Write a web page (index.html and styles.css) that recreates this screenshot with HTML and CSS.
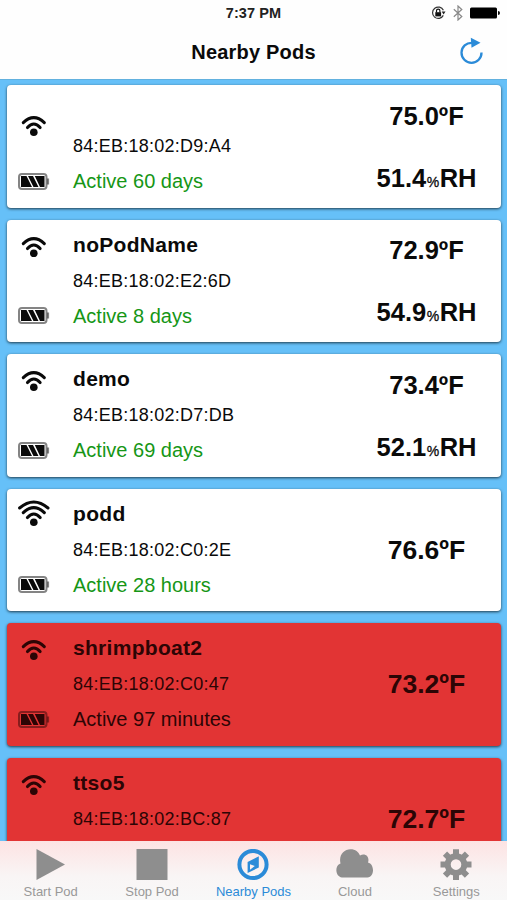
FILE: index.html
```html
<!DOCTYPE html>
<html lang="en">
<head>
<meta charset="utf-8">
<title>Nearby Pods</title>
<link rel="stylesheet" href="styles.css">
</head>
<body>
<svg class="sprite" aria-hidden="true">
  <symbol id="wifi" viewBox="0 0 32 28">
    <circle cx="15.800" cy="22.300" r="3.800" fill="currentColor"/>
    <path d="M9.500 17.600Q15.800 10.400 22.100 17.600M5.300 12.600Q15.800 2.800 26.300 12.600" fill="none" stroke="currentColor" stroke-width="3.100" stroke-linecap="round"/>
  </symbol>
  <symbol id="wifi-full" viewBox="0 0 32 28">
    <use href="#wifi" width="32" height="28"/>
    <path d="M1.600 8Q15.800 -4 30 8" fill="none" stroke="currentColor" stroke-width="3" stroke-linecap="round"/>
  </symbol>
  <symbol id="battery" viewBox="0 0 32 17">
    <rect x="1" y="1" width="27.500" height="15" rx="3" fill="none" stroke="currentColor" stroke-opacity=".5" stroke-width="2"/>
    <path d="M30 5.500v6" stroke="currentColor" stroke-opacity=".5" stroke-width="2.200"/>
    <path d="M3 3h5.500l5.500 11H3zM10 3h5l5.500 11H15.500zM16.800 3H26.500v11h-4.500z" fill="currentColor"/>
  </symbol>
</svg>

<div class="screen">
  <header class="header">
    <div class="status">
      <span></span>
      <span class="time">7:37 PM</span>
      <span class="indicators">
        <svg width="15" height="14" viewBox="0 0 15 14">
          <path d="M12.300 9.400A5.700 5.700 0 1 1 12.400 4.300" fill="none" stroke="#333" stroke-width="1.200"/>
          <path d="M10.700 5.500h3.800l-1.900 2.900z" fill="#222"/>
          <rect x="4.300" y="6.200" width="5.800" height="4.200" fill="#111"/>
          <path d="M5.500 6.500V4.800a1.700 1.700 0 0 1 3.400 0v1.700" fill="none" stroke="#111" stroke-width="1.200"/>
        </svg>
        <svg width="10" height="16" viewBox="0 0 10 16">
          <path d="M.8 4.200l8 7.300L5 15V1l3.800 3.500-8 7.300" fill="none" stroke="#888" stroke-width="1.200"/>
        </svg>
        <svg width="30" height="12" viewBox="0 0 30 12">
          <rect x="0" y=".5" width="27" height="11" rx="1.500" fill="#000"/>
          <path d="M28 4a2 2 0 0 1 0 4z" fill="#111"/>
        </svg>
      </span>
    </div>
    <div class="navbar">
      <span></span>
      <h1 class="title">Nearby Pods</h1>
      <svg class="refresh" width="26" height="28" viewBox="0 0 26 28">
        <path d="M22.500 15.500A10 10 0 1 1 13 5.800" fill="none" stroke="#2b8bd8" stroke-width="2.300"/>
        <path d="M11.800 .8L21.500 5.800L12.500 10.800z" fill="#2b8bd8"/>
      </svg>
    </div>
  </header>

  <main class="list">
    <article class="card unnamed">
      <div class="icons"><svg class="wifi"><use href="#wifi"/></svg><svg class="battery"><use href="#battery"/></svg></div>
      <div class="info"><h2 class="name"></h2><p class="mac">84:EB:18:02:D9:A4</p><p class="active">Active 60 days</p></div>
      <div class="readings"><p>75.0ºF</p><p class="humidity">51.4<small>%</small>RH</p></div>
    </article>
    <article class="card">
      <div class="icons"><svg class="wifi"><use href="#wifi"/></svg><svg class="battery"><use href="#battery"/></svg></div>
      <div class="info"><h2 class="name">noPodName</h2><p class="mac">84:EB:18:02:E2:6D</p><p class="active">Active 8 days</p></div>
      <div class="readings"><p>72.9ºF</p><p class="humidity">54.9<small>%</small>RH</p></div>
    </article>
    <article class="card">
      <div class="icons"><svg class="wifi"><use href="#wifi"/></svg><svg class="battery"><use href="#battery"/></svg></div>
      <div class="info"><h2 class="name">demo</h2><p class="mac">84:EB:18:02:D7:DB</p><p class="active">Active 69 days</p></div>
      <div class="readings"><p>73.4ºF</p><p class="humidity">52.1<small>%</small>RH</p></div>
    </article>
    <article class="card">
      <div class="icons"><svg class="wifi"><use href="#wifi-full"/></svg><svg class="battery"><use href="#battery"/></svg></div>
      <div class="info"><h2 class="name">podd</h2><p class="mac">84:EB:18:02:C0:2E</p><p class="active">Active 28 hours</p></div>
      <div class="readings single"><p>76.6ºF</p></div>
    </article>
    <article class="card alert">
      <div class="icons"><svg class="wifi"><use href="#wifi"/></svg><svg class="battery"><use href="#battery"/></svg></div>
      <div class="info"><h2 class="name">shrimpboat2</h2><p class="mac">84:EB:18:02:C0:47</p><p class="active">Active 97 minutes</p></div>
      <div class="readings single"><p>73.2ºF</p></div>
    </article>
    <article class="card alert">
      <div class="icons"><svg class="wifi"><use href="#wifi"/></svg></div>
      <div class="info"><h2 class="name">ttso5</h2><p class="mac">84:EB:18:02:BC:87</p></div>
      <div class="readings single"><p>72.7ºF</p></div>
    </article>
  </main>

  <nav class="tabs">
    <a class="tab"><svg width="38" height="32" viewBox="0 0 38 32"><path d="M4.500 0L33 15.500L4.500 31z" fill="currentColor"/></svg><span>Start Pod</span></a>
    <a class="tab"><svg width="38" height="32" viewBox="0 0 38 32"><path d="M3.500 0h31v31h-31z" fill="currentColor"/></svg><span>Stop Pod</span></a>
    <a class="tab current"><svg width="38" height="32" viewBox="0 0 38 32"><circle cx="19" cy="15.500" r="13.600" fill="none" stroke="currentColor" stroke-width="4"/><path fill-rule="evenodd" d="M24.800 7.200V18.500L13.600 24V13zM16 15.200V20.800L20.800 17z" fill="currentColor"/></svg><span>Nearby Pods</span></a>
    <a class="tab"><svg width="38" height="32" viewBox="0 0 38 32"><path d="M6 28.500C-1 28-1.500 16 4.500 14.500C2.500 6 8 .3 14.500 .3C19.500 .3 22.500 3 24 6.500C29 3.500 34 7.500 32 13.500C38.500 15 39 27.500 31.500 28.500z" fill="currentColor"/></svg><span>Cloud</span></a>
    <a class="tab"><svg width="38" height="32" viewBox="0 0 38 32"><g fill="none" stroke="currentColor"><circle cx="19" cy="15.600" r="8.300" stroke-width="6"/><path d="M19 .2v5.500M19 25.500V31M3.500 15.600H9M29 15.600h5.500M8 4.600l4 4M26 22.600l4 4M30 4.600l-4 4M12 22.600l-4 4" stroke-width="6"/></g></svg><span>Settings</span></a>
  </nav>
</div>
</body>
</html>
```
FILE: styles.css
```css
* { box-sizing: border-box; }
body { margin: 0; font-family: "Liberation Sans", Arial, sans-serif; color: #0a0a0a; }
h1, h2, p { margin: 0; }
svg { display: block; }
.sprite { position: absolute; width: 0; height: 0; }

.screen { width: 507px; height: 900px; display: flex; flex-direction: column; overflow: hidden; background: #66c0f8; }

.header { flex: none; height: 79px; background: #fefefe; }
.status { height: 27px; display: grid; grid-template-columns: 1fr auto 1fr; align-items: center; }
.time { font-size: 14.5px; font-weight: 700; line-height: 27px; letter-spacing: .1px; color: #222; }
.indicators { display: flex; align-items: center; justify-content: flex-end; gap: 7px; padding: 0 7px 1px 0; }
.navbar { height: 52px; display: grid; grid-template-columns: 1fr auto 1fr; }
.title { font-size: 20px; line-height: 50px; font-weight: 700; letter-spacing: .2px; }
.refresh { justify-self: end; margin: 10px 22px 0 0; }

.list { flex: none; height: 762px; padding: 5px 6px 0 7px; display: flex; flex-direction: column; gap: 12px; overflow: hidden; border-top: 1px solid #62b1df; }
.card { flex: none; height: 122.5px; display: grid; grid-template-columns: 66px 1fr 149px; background: #fff; border-radius: 4px; box-shadow: 0 1px 3px rgba(0, 0, 0, .7); }
.alert { background: #e23434; color: #2c0505; }
.icons { display: flex; flex-direction: column; padding: 11px 0 0 11px; }
.wifi { width: 32px; height: 28px; }
.battery { width: 32px; height: 17px; margin-top: 48.5px; }
.unnamed .icons { padding-top: 25px; }
.unnamed .battery { margin-top: 34.5px; }
.info { padding-top: 11px; white-space: nowrap; }
.name { height: 32px; font-size: 21px; line-height: 28px; font-weight: 700; letter-spacing: .3px; }
.mac { height: 36px; font-size: 18px; line-height: 36px; letter-spacing: .24px; }
.active { font-size: 20px; line-height: 34px; color: #169616; }
.alert .active { color: #2c0505; }
.readings { display: flex; flex-direction: column; justify-content: space-between; align-items: center; padding: 15.5px 0 11px; font-size: 25.5px; line-height: 30px; font-weight: 700; }
.readings.single { justify-content: center; padding: 0; font-size: 26.5px; }
.humidity small { font-size: 14px; font-weight: 400; margin: 0 .5px; -webkit-text-stroke: .3px currentColor; }

.tabs { flex: none; height: 59px; display: grid; grid-template-columns: repeat(5, 1fr); background: linear-gradient(#fde3e3, #f9f5f5 60%, #f8f8f8); }
.tab { display: flex; flex-direction: column; align-items: center; padding-top: 8px; color: #8e8e8e; }
.tab span { font-size: 13px; line-height: 15px; margin-top: 3px; color: #999; }
.tab.current, .tab.current span { color: #2b8bd8; }
```
